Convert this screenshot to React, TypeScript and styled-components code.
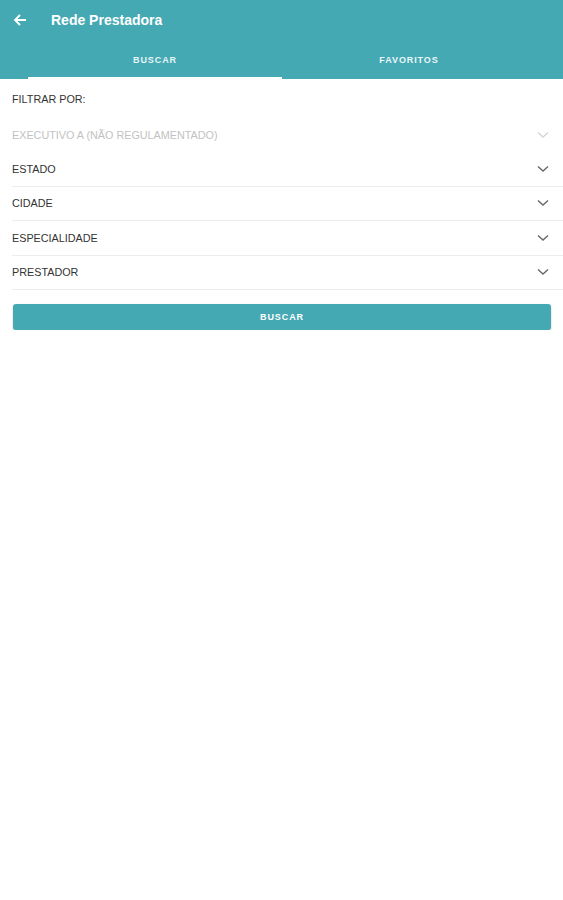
import React from 'react'
import styled, { createGlobalStyle } from 'styled-components'

const GlobalStyle = createGlobalStyle`
  body {
    margin: 0;
    background: #fff;
    font-family: "Liberation Sans", Arial, sans-serif;
  }
`

const Header = styled.div`
  background: #45a9b4;
  color: #fff;
`

const TitleBar = styled.div`
  display: flex;
  align-items: center;
  height: 40px;
  padding-left: 13px;
`

const BackButton = styled.div`
  width: 14px;
  height: 14px;
  display: flex;
  align-items: center;
  margin-right: 24px;
`

const Title = styled.div`
  font-size: 14px;
  font-weight: bold;
`

const Tabs = styled.div`
  display: flex;
  padding: 0 27px 0 28px;
  height: 39px;
`

const Tab = styled.div<{ active?: boolean }>`
  flex: 1;
  display: flex;
  align-items: center;
  justify-content: center;
  font-size: 9px;
  font-weight: bold;
  letter-spacing: 0.9px;
  padding-top: 2px;
  color: ${({ active }) => (active ? '#e6f5f6' : '#eaf6f7')};
  border-bottom: 2px solid ${({ active }) => (active ? '#fff' : 'transparent')};
`

const Content = styled.div`
  padding: 0 12px;
`

const FilterLabel = styled.div`
  font-size: 10.8px;
  color: #333;
  height: 39px;
  padding-top: 14px;
  box-sizing: border-box;
`

const Row = styled.div<{ disabled?: boolean; divider?: boolean }>`
  display: flex;
  align-items: center;
  justify-content: space-between;
  box-sizing: border-box;
  height: 34.4px;
  margin-right: -12px;
  padding-right: 14px;
  font-size: 10.8px;
  color: ${({ disabled }) => (disabled ? '#c2c2c2' : '#333')};
  border-bottom: 1px solid ${({ divider }) => (divider ? '#ececec' : 'transparent')};
`

const Button = styled.div`
  margin: 14px 0 0 1px;
  width: 538px;
  height: 26px;
  border-radius: 3px;
  background: #45a9b4;
  box-shadow: 0 1px 2px rgba(0, 0, 0, 0.25);
  color: #fff;
  font-size: 9px;
  font-weight: bold;
  letter-spacing: 0.9px;
  display: flex;
  align-items: center;
  justify-content: center;
`

function Chevron({ color }: { color: string }) {
  return (
    <svg width="12" height="8" viewBox="0 0 12 8">
      <path d="M1 1.5 L6 6 L11 1.5" fill="none" stroke={color} strokeWidth="1.4" />
    </svg>
  )
}

const rows = [
  { label: 'EXECUTIVO A (NÃO REGULAMENTADO)', disabled: true },
  { label: 'ESTADO' },
  { label: 'CIDADE' },
  { label: 'ESPECIALIDADE' },
  { label: 'PRESTADOR' },
]

export default function App() {
  return (
    <>
      <GlobalStyle />
      <Header>
        <TitleBar>
          <BackButton>
            <svg width="14" height="14" viewBox="0 0 14 14">
              <path d="M13 7 H2 M7 2 L2 7 L7 12" fill="none" stroke="#fff" strokeWidth="1.8" />
            </svg>
          </BackButton>
          <Title>Rede Prestadora</Title>
        </TitleBar>
        <Tabs>
          <Tab active>BUSCAR</Tab>
          <Tab>FAVORITOS</Tab>
        </Tabs>
      </Header>
      <Content>
        <FilterLabel>FILTRAR POR:</FilterLabel>
        {rows.map(({ label, disabled }) => (
          <Row key={label} disabled={disabled} divider={!disabled}>
            <span>{label}</span>
            <Chevron color={disabled ? '#d4d4d4' : '#666'} />
          </Row>
        ))}
        <Button>BUSCAR</Button>
      </Content>
    </>
  )
}
